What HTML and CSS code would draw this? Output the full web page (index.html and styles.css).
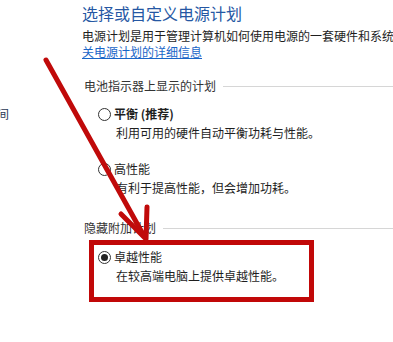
FILE: index.html
```html
<!DOCTYPE html>
<html lang="zh">
<head>
<meta charset="utf-8">
<link rel="stylesheet" href="styles.css">
</head>
<body>
<div class="page">
  <aside class="sidebar"><span class="side-link">间</span></aside>
  <main class="main">
    <h1 class="title">选择或自定义电源计划</h1>
    <p class="intro">
      <span class="line">电源计划是用于管理计算机如何使用电源的一套硬件和系统设置</span>
      <a class="line link" href="#">关电源计划的详细信息</a>
    </p>

    <div class="group-label"><span>电池指示器上显示的计划</span><i class="rule"></i></div>

    <div class="plan plan-first">
      <div class="radio-row"><span class="radio"></span><b class="plan-name">平衡 (推荐)</b></div>
      <div class="desc">利用可用的硬件自动平衡功耗与性能。</div>
    </div>
    <div class="plan plan-second">
      <div class="radio-row"><span class="radio"></span><span class="plan-name">高性能</span></div>
      <div class="desc">有利于提高性能，但会增加功耗。</div>
    </div>

    <div class="group-label group-hidden"><span>隐藏附加计划</span><i class="rule"></i></div>

    <div class="highlight">
      <div class="radio-row"><span class="radio checked"></span><span class="plan-name">卓越性能</span></div>
      <div class="desc">在较高端电脑上提供卓越性能。</div>
    </div>
  </main>
  <svg class="arrow" width="393" height="342" viewBox="0 0 393 342">
    <line x1="46" y1="60" x2="144" y2="236" stroke="#c00a0a" stroke-width="5" stroke-linecap="round"/>
    <polyline points="121,214 146,239 147,207" fill="none" stroke="#c00a0a" stroke-width="5" stroke-linecap="round" stroke-linejoin="round"/>
  </svg>
</div>
</body>
</html>
```
FILE: styles.css
```css
html, body {
  margin: 0;
  padding: 0;
  background: #ffffff;
}
body {
  width: 393px;
  height: 342px;
  overflow: hidden;
  font-family: "Noto Sans CJK SC", "Noto Sans", sans-serif;
  font-size: 12px;
  color: #1e1e1e;
}
.page {
  position: relative;
  display: flex;
  width: 393px;
  height: 342px;
}
.sidebar {
  width: 82px;
  flex: none;
  padding-top: 106px;
  box-sizing: border-box;
}
.side-link {
  display: block;
  margin-left: -3px;
  line-height: 16px;
  color: #2b3a55;
}
.main {
  flex: 1;
  min-width: 0;
  display: flex;
  flex-direction: column;
}
.title {
  margin: 2px 0 0 0;
  font-size: 16px;
  font-weight: normal;
  line-height: 22px;
  color: #2557a3;
  white-space: nowrap;
}
.intro {
  margin: 4px 0 0 0;
  line-height: 16px;
}
.line {
  display: block;
  white-space: nowrap;
}
.link {
  color: #1a66c8;
  text-decoration: underline;
}
.group-label {
  display: flex;
  align-items: center;
  margin: 18px 0 0 2px;
  line-height: 16px;
  color: #333333;
}
.group-label span {
  white-space: nowrap;
}
.rule {
  flex: 1;
  height: 1px;
  margin-left: 7px;
  background: #d6d6d6;
}
.group-hidden {
  margin-top: 24px;
}
.plan {
  margin-left: 16px;
}
.plan-first {
  margin-top: 12px;
}
.plan-second {
  margin-top: 20px;
}
.radio-row {
  display: flex;
  align-items: center;
  line-height: 16px;
  gap: 3px;
}
.radio {
  width: 11px;
  height: 11px;
  border: 1px solid #333333;
  border-radius: 50%;
  background: #ffffff;
  flex: none;
  position: relative;
}
.radio.checked::after {
  content: "";
  position: absolute;
  left: 2px;
  top: 2px;
  width: 7px;
  height: 7px;
  border-radius: 50%;
  background: #222222;
}
.plan-name {
  white-space: nowrap;
}
b.plan-name {
  font-weight: bold;
}
.desc {
  margin: 3px 0 0 18px;
  line-height: 16px;
  white-space: nowrap;
}
.highlight {
  margin: 4px 0 0 7px;
  width: 225px;
  box-sizing: border-box;
  border: 5px solid #c10808;
  padding: 4px 0 13px 4px;
}
.arrow {
  position: absolute;
  left: 0;
  top: 0;
  pointer-events: none;
}
```
